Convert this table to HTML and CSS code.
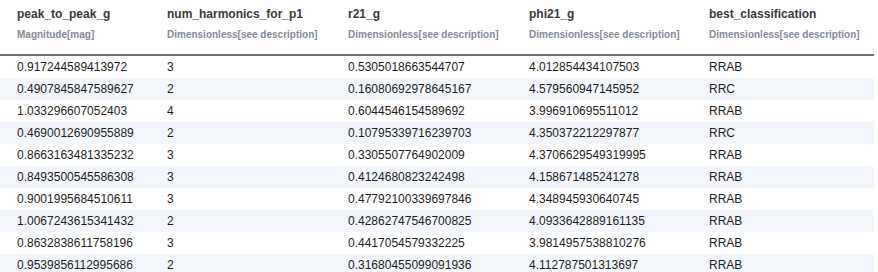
FILE: index.html
```html
<!DOCTYPE html>
<html lang="en">
<head>
    <meta charset="UTF-8">
    <title>Light curve features</title>
    <link rel="stylesheet" href="styles.css">
</head>
<body>
    <table class="feature-table">
        <colgroup>
            <col class="col-ptp">
            <col class="col-nh">
            <col class="col-r21">
            <col class="col-phi21">
            <col class="col-class">
        </colgroup>
        <thead>
            <tr>
                <th><div class="col-name">peak_to_peak_g</div><div class="col-unit">Magnitude[mag]</div></th>
                <th><div class="col-name">num_harmonics_for_p1</div><div class="col-unit">Dimensionless[see description]</div></th>
                <th><div class="col-name">r21_g</div><div class="col-unit">Dimensionless[see description]</div></th>
                <th><div class="col-name">phi21_g</div><div class="col-unit">Dimensionless[see description]</div></th>
                <th><div class="col-name">best_classification</div><div class="col-unit">Dimensionless[see description]</div></th>
            </tr>
        </thead>
        <tbody>
            <tr><td>0.917244589413972</td><td>3</td><td>0.5305018663544707</td><td>4.012854434107503</td><td>RRAB</td></tr>
            <tr><td>0.4907845847589627</td><td>2</td><td>0.16080692978645167</td><td>4.579560947145952</td><td>RRC</td></tr>
            <tr><td>1.033296607052403</td><td>4</td><td>0.6044546154589692</td><td>3.996910695511012</td><td>RRAB</td></tr>
            <tr><td>0.4690012690955889</td><td>2</td><td>0.10795339716239703</td><td>4.350372212297877</td><td>RRC</td></tr>
            <tr><td>0.8663163481335232</td><td>3</td><td>0.3305507764902009</td><td>4.3706629549319995</td><td>RRAB</td></tr>
            <tr><td>0.8493500545586308</td><td>3</td><td>0.4124680823242498</td><td>4.158671485241278</td><td>RRAB</td></tr>
            <tr><td>0.9001995684510611</td><td>3</td><td>0.47792100339697846</td><td>4.348945930640745</td><td>RRAB</td></tr>
            <tr><td>1.0067243615341432</td><td>2</td><td>0.42862747546700825</td><td>4.0933642889161135</td><td>RRAB</td></tr>
            <tr><td>0.8632838611758196</td><td>3</td><td>0.4417054579332225</td><td>3.9814957538810276</td><td>RRAB</td></tr>
            <tr><td>0.9539856112995686</td><td>2</td><td>0.31680455099091936</td><td>4.112787501313697</td><td>RRAB</td></tr>
        </tbody>
    </table>
</body>
</html>
```

FILE: styles.css
```css
:root {
    --cell-indent: 17px;
    --row-height: 22px;
    --color-head: #3a3a3a;
    --color-unit: #858a97;
    --color-text: #1e1e1e;
    --color-rule: #717171;
    --color-stripe: #f3f6fa;
}

body {
    margin: 0;
    font-family: 'Liberation Sans', Arial, sans-serif;
    background-color: #fff;
    color: var(--color-text);
}

.feature-table {
    width: 874px;
    table-layout: fixed;
    border-collapse: collapse;
    font-size: 12px;
}

.col-ptp { width: 150px; }
.col-nh { width: 181px; }
.col-r21 { width: 181px; }
.col-phi21 { width: 180px; }
.col-class { width: 182px; }

.feature-table th {
    text-align: left;
    vertical-align: top;
    padding: 6px 0 12px var(--cell-indent);
    border-bottom: 2px solid var(--color-rule);
    white-space: nowrap;
}

.col-name {
    font-size: 12px;
    line-height: 16px;
    font-weight: bold;
    color: var(--color-head);
}

.col-unit {
    margin-top: 6px;
    font-size: 10px;
    line-height: 14px;
    font-weight: bold;
    color: var(--color-unit);
}

.feature-table td {
    padding: 0 0 0 var(--cell-indent);
    height: var(--row-height);
    line-height: var(--row-height);
    white-space: nowrap;
}

.feature-table tbody tr:nth-child(even) {
    background-color: var(--color-stripe);
}
```
